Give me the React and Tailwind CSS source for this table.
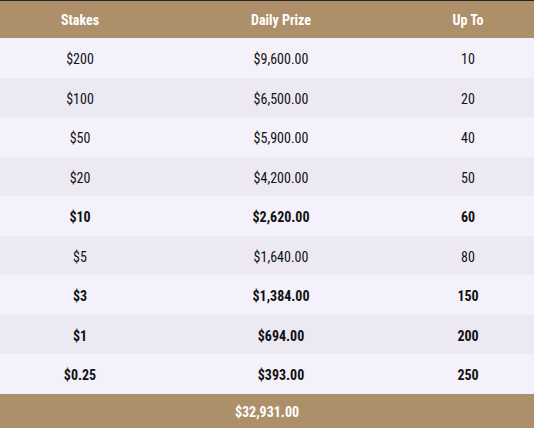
export default function App() {
  const rows = [
    ["$200", "$9,600.00", "10", false],
    ["$100", "$6,500.00", "20", false],
    ["$50", "$5,900.00", "40", false],
    ["$20", "$4,200.00", "50", false],
    ["$10", "$2,620.00", "60", true],
    ["$5", "$1,640.00", "80", false],
    ["$3", "$1,384.00", "150", true],
    ["$1", "$694.00", "200", true],
    ["$0.25", "$393.00", "250", true],
  ];
  return (
    <div
      className="w-[534px] h-[428px] overflow-hidden bg-[#f4f1fb] text-[14px] text-[#111]"
      style={{ fontFamily: '"Roboto Condensed", Roboto, sans-serif' }}
    >
      <div className="h-px bg-[#22262a]" />
      <div className="grid grid-cols-[160px_242px_132px] h-[37px] pt-[2px] bg-[#ad9069] text-white font-bold items-center text-center">
        <div>Stakes</div>
        <div>Daily Prize</div>
        <div>Up To</div>
      </div>
      {rows.map(([a, b, c, bold], i) => (
        <div
          key={i}
          className={`grid grid-cols-[160px_242px_132px] h-[39.5px] pt-[4px] items-center text-center ${
            i % 2 === 0 ? "bg-[#f4f1fb]" : "bg-[#ece9f3]"
          } ${bold ? "font-bold" : "font-normal"}`}
        >
          <div>{a}</div>
          <div>{b}</div>
          <div>{c}</div>
        </div>
      ))}
      <div className="h-[35px] pt-[3px] bg-[#ad9069] text-white font-bold flex items-center justify-center">
        $32,931.00
      </div>
    </div>
  );
}
